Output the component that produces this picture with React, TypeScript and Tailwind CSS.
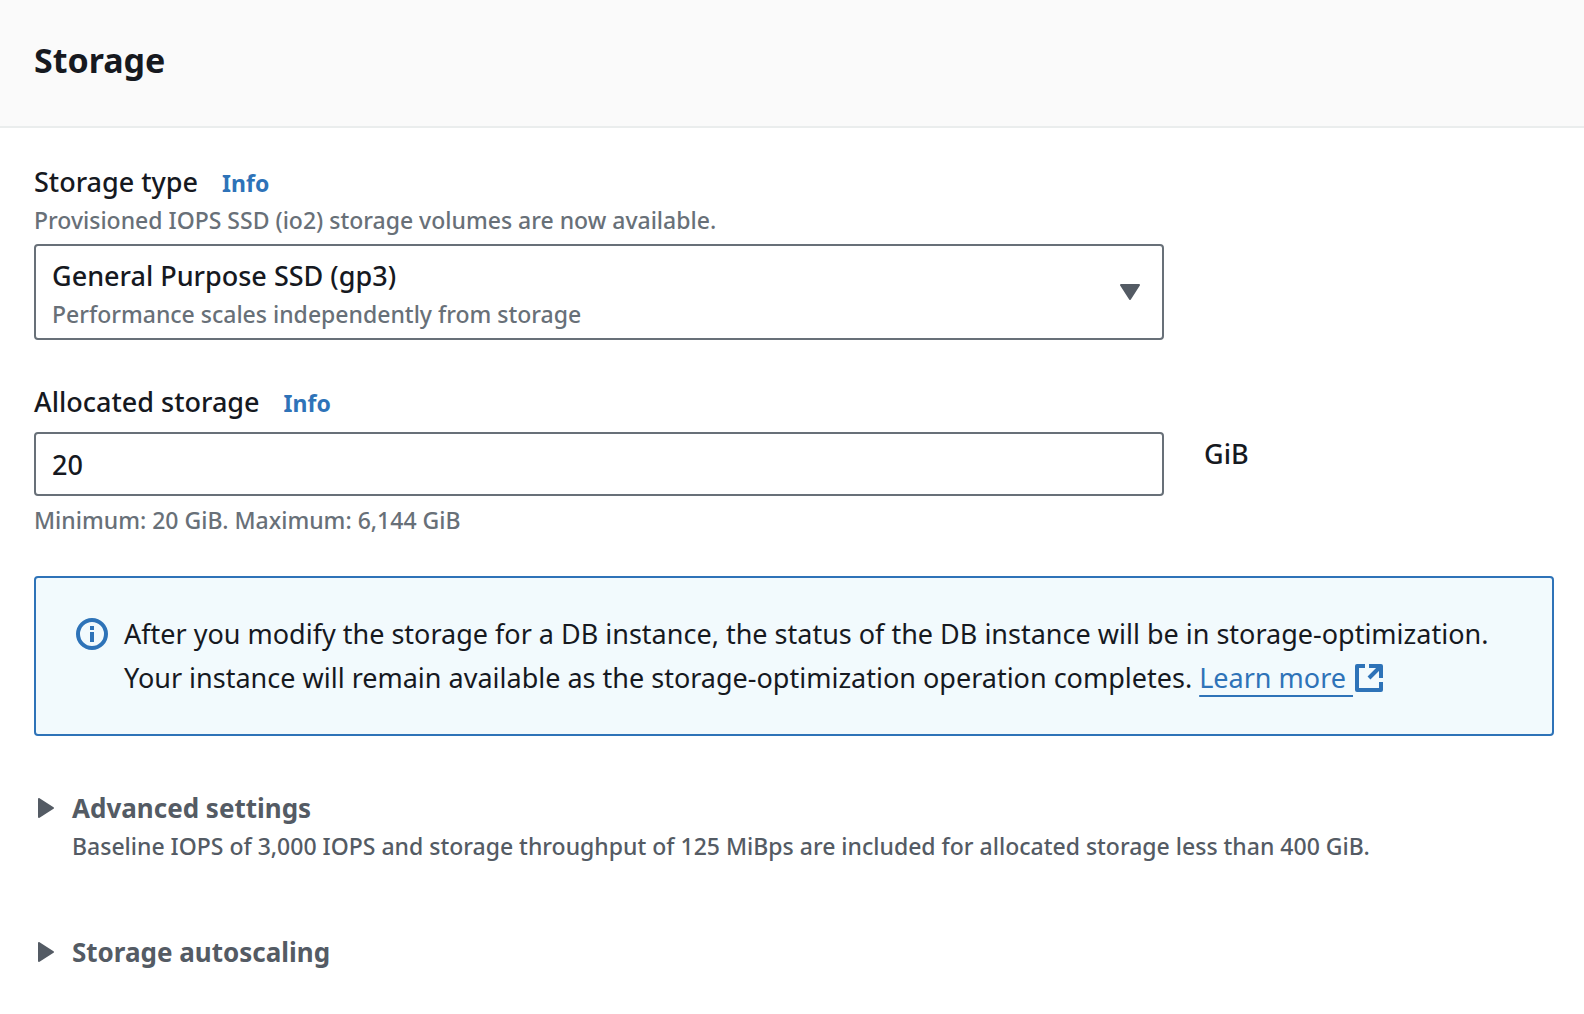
import { useState } from "react";
import type { ReactNode } from "react";

function InfoLink({ topic }: { topic: string }) {
  return (
    <a href="#info" aria-label={`Info about ${topic}`} className="text-[23px] leading-7 font-bold text-[#2e73b8]">
      Info
    </a>
  );
}

function InfoIcon() {
  return (
    <svg viewBox="0 0 32 32" className="mt-1.5 size-8 shrink-0" fill="none" aria-hidden="true">
      <circle cx="16" cy="16" r="14" stroke="#2e73b8" strokeWidth="4" />
      <path d="M14 8h4v4h-4zM14 14h4v10h-4z" fill="#2e73b8" />
    </svg>
  );
}

function ExternalIcon() {
  return (
    <svg viewBox="0 0 28 28" className="ml-0.5 inline-block size-7 align-[-4px]" fill="none" aria-hidden="true">
      <path d="M10 2H2v24h24v-8" stroke="#2e73b8" strokeWidth="4" strokeLinejoin="round" />
      <path d="M14 2h12v12" stroke="#2e73b8" strokeWidth="4" strokeLinejoin="round" />
      <path d="M26 2L14 14" stroke="#2e73b8" strokeWidth="4" />
    </svg>
  );
}

function Expandable({ title, description }: { title: string; description?: ReactNode }) {
  const [open, setOpen] = useState(false);
  return (
    <div className="flex gap-[18px] text-[#545b64]">
      <svg viewBox="0 0 16 20" className="ml-1 mt-2 h-5 w-4 shrink-0" aria-hidden="true">
        <path d="M1 1v18L15 10z" fill="#545b64" stroke="#545b64" strokeWidth="2" strokeLinejoin="round" />
      </svg>
      <div>
        <button
          type="button"
          aria-expanded={open}
          onClick={() => setOpen(!open)}
          className="block text-[26px] leading-9 font-bold"
        >
          {title}
        </button>
        {description && <p className="text-[23px] leading-10">{description}</p>}
      </div>
    </div>
  );
}

export default function App() {
  const [size, setSize] = useState("20");
  return (
    <main className="min-h-screen bg-white font-['Noto_Sans',sans-serif] text-[27px] font-medium text-[#16191f]">
      <header className="border-b-2 border-[#eaeded] bg-[#fafafa] px-[34px] pt-9 pb-[42px]">
        <h2 className="text-[34px] leading-12 font-bold">Storage</h2>
      </header>

      <div className="pt-9 pr-[30px] pl-[34px]">
        <div className="grid grid-cols-4 gap-x-10">
          <div className="col-span-3">
            <div className="flex items-baseline gap-6 leading-9">
              <label htmlFor="storage-type">Storage type</label>
              <InfoLink topic="storage type" />
            </div>
            <p className="text-[23px] leading-10 text-[#687078]">
              Provisioned IOPS SSD (io2) storage volumes are now available.
            </p>
            <div className="relative mt-1">
              <select
                id="storage-type"
                className="block h-24 w-full appearance-none rounded-sm border-2 border-[#687078] bg-white pr-16 pb-8 pl-4"
              >
                <option>General Purpose SSD (gp3)</option>
              </select>
              <p className="pointer-events-none absolute bottom-2 left-[18px] text-[23px] leading-9 text-[#687078]">
                Performance scales independently from storage
              </p>
              <svg
                viewBox="0 0 20 16"
                className="pointer-events-none absolute top-10 right-6 h-4 w-5"
                aria-hidden="true"
              >
                <path d="M1 1h18L10 15z" fill="#545b64" stroke="#545b64" strokeWidth="2" strokeLinejoin="round" />
              </svg>
            </div>
          </div>
        </div>

        <div className="mt-11 flex items-baseline gap-6 leading-9">
          <label htmlFor="allocated">Allocated storage</label>
          <InfoLink topic="allocated storage" />
        </div>
        <div className="mt-3 grid grid-cols-4 gap-x-10">
          <input
            id="allocated"
            type="text"
            inputMode="numeric"
            value={size}
            onChange={(e) => setSize(e.target.value)}
            className="col-span-3 h-16 w-full rounded-sm border-2 border-[#687078] bg-white px-4"
          />
          <span className="leading-11">GiB</span>
        </div>
        <p className="mt-1.5 text-[23px] leading-9 text-[#687078]">Minimum: 20 GiB. Maximum: 6,144 GiB</p>

        <div
          role="status"
          className="mt-[38px] flex gap-4 rounded-sm border-2 border-[#2e73b8] bg-[#f2fafd] px-10 py-[34px]"
        >
          <InfoIcon />
          <p className="leading-11 font-normal">
            After you modify the storage for a DB instance, the status of the DB instance will be in
            storage-optimization. Your instance will remain available as the storage-optimization operation completes.{" "}
            <a
              href="#learn-more"
              className="whitespace-pre text-[#2e73b8] underline decoration-2 underline-offset-[7px]"
            >
              {"Learn more "}
              <ExternalIcon />
            </a>
          </p>
        </div>

        <div className="mt-[54px] flex flex-col gap-[68px]">
          <Expandable
            title="Advanced settings"
            description="Baseline IOPS of 3,000 IOPS and storage throughput of 125 MiBps are included for allocated storage less than 400 GiB."
          />
          <Expandable title="Storage autoscaling" />
        </div>
      </div>
    </main>
  );
}
